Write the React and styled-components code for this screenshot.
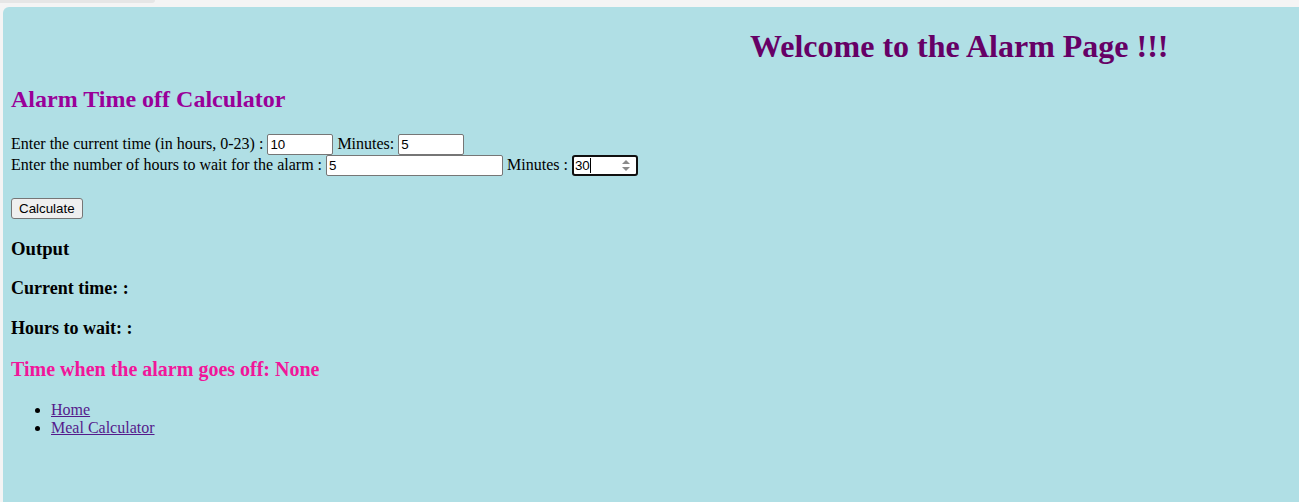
import React from "react";
import styled, { createGlobalStyle } from "styled-components";

const GlobalStyle = createGlobalStyle`
  html, body {
    margin: 0;
    padding: 0;
    background: #f4f4f4;
  }
  body {
    font-family: "Liberation Serif", "Times New Roman", serif;
    font-size: 16px;
    color: #000;
  }
`;

const TopStrip = styled.div`
  height: 7px;
  display: flex;
  align-items: flex-start;
`;

const Tab = styled.div`
  width: 155px;
  height: 3px;
  background: #e6e6e6;
  border-radius: 0 0 4px 0;
`;

const Panel = styled.main`
  margin-left: 3px;
  background: #b0dfe5;
  border-radius: 6px 0 0 0;
  padding: 0 8px 60px;
  display: flow-root;
  min-height: 440px;
`;

const Welcome = styled.h1`
  font-size: 32px;
  font-weight: bold;
  color: #660066;
  margin: 21px 0 21px 739px;
`;

const Title = styled.h2`
  font-size: 24px;
  font-weight: bold;
  color: #990099;
  margin: 20px 0;
`;

const Form = styled.form`
  margin: 0;
  line-height: 21px;
`;

const Line = styled.div`
  white-space: nowrap;
  height: 21px;
`;

const Field = styled.input`
  font-family: Arial, "Liberation Sans", sans-serif;
  font-size: 13.33px;
  box-sizing: border-box;
  width: ${p => p.$w}px;
  height: 21px;
  padding: 1px 2px;
  border: 1px solid #767676;
  border-radius: 2px;
  background: #fff;
  color: #000;
  vertical-align: baseline;
  outline: none;
`;

const FocusBox = styled.span`
  position: relative;
  display: inline-flex;
  align-items: baseline;
  box-sizing: border-box;
  width: 66px;
  height: 21px;
  border: 2px solid #101010;
  border-radius: 3px;
  background: #fff;
  vertical-align: baseline;
`;

const BareInput = styled.input`
  font-family: Arial, "Liberation Sans", sans-serif;
  font-size: 13.33px;
  height: 17px;
  border: none;
  outline: none;
  padding: 0 1px;
  width: 44px;
  background: transparent;
  color: #000;
`;

const Caret = styled.span`
  position: absolute;
  left: 16px;
  top: 1px;
  width: 1px;
  height: 15px;
  background: #000;
`;

const Spinner = styled.svg`
  position: absolute;
  right: 6px;
  top: 3px;
`;

const Gap = styled.div`
  height: 22px;
`;

const Button = styled.button`
  font-family: Arial, "Liberation Sans", sans-serif;
  font-size: 13.33px;
  height: 21px;
  padding: 1px 7px;
  border: 1px solid #767676;
  border-radius: 3px;
  background: #efefef;
  color: #000;
`;

const Heading = styled.h3`
  font-size: ${p => p.$size || 18.72}px;
  font-weight: bold;
  margin: 18.72px 0;
  color: ${p => p.$color || "#000"};
`;

const Links = styled.ul`
  margin: 20px 0 16px;
  padding-left: 40px;
  line-height: 18px;
`;

const NavLink = styled.a`
  color: #551a8b;
  text-decoration: underline;
`;

const NumberField = ({ value }) => (
  <FocusBox>
    <BareInput type="text" defaultValue={value} />
    <Caret />
    <Spinner width="8" height="11" viewBox="0 0 8 11">
      <path d="M4 0 L8 4 L0 4 Z" fill="#8a8a8a" />
      <path d="M0 7 L8 7 L4 11 Z" fill="#8a8a8a" />
    </Spinner>
  </FocusBox>
);

const App = () => (
  <>
    <GlobalStyle />
    <TopStrip>
      <Tab />
    </TopStrip>
    <Panel>
      <Welcome>Welcome to the Alarm Page !!!</Welcome>
      <Title>Alarm Time off Calculator</Title>
      <Form onSubmit={e => e.preventDefault()}>
        <Line>
          Enter the current time (in hours, 0-23) :{" "}
          <Field $w={66} defaultValue="10" /> Minutes:{" "}
          <Field $w={66} defaultValue="5" />
        </Line>
        <Line>
          Enter the number of hours to wait for the alarm :{" "}
          <Field $w={177} defaultValue="5" /> Minutes :{" "}
          <NumberField value="30" />
        </Line>
        <Gap />
        <Button type="submit">Calculate</Button>
      </Form>
      <Heading>Output</Heading>
      <Heading $size={18}>Current time: :</Heading>
      <Heading $size={18}>Hours to wait: :</Heading>
      <Heading $size={20} $color="#f0169a">
        Time when the alarm goes off: None
      </Heading>
      <Links>
        <li>
          <NavLink href="#home">Home</NavLink>
        </li>
        <li>
          <NavLink href="#meal">Meal Calculator</NavLink>
        </li>
      </Links>
    </Panel>
  </>
);

export default App;
